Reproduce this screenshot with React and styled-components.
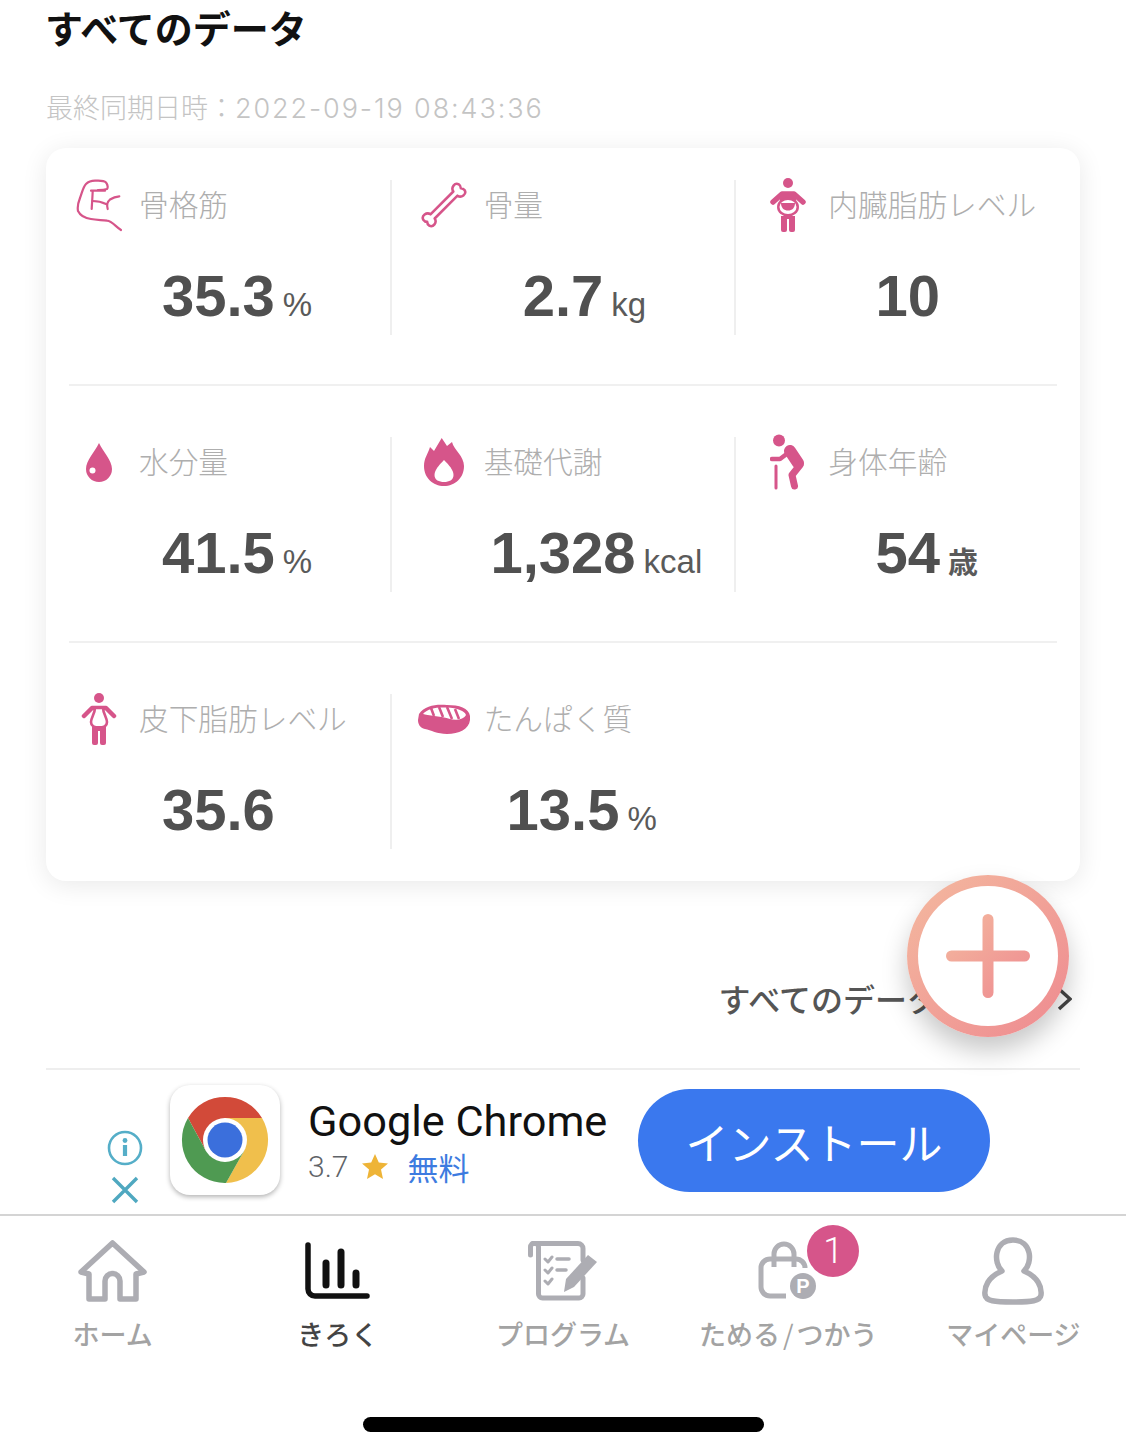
import React from 'react';
import styled, { createGlobalStyle } from 'styled-components';

const PINK = '#d6558a';
const NAV_GREY = '#adadb3';
const JP = '"Noto Sans CJK JP", "Liberation Sans", sans-serif';
const LATIN = '"Liberation Sans", "Noto Sans CJK JP", sans-serif';

const GlobalStyle = createGlobalStyle`
  html, body {
    margin: 0;
    padding: 0;
    background: #fff;
  }
  body {
    font-family: ${JP};
    overflow: hidden;
  }
`;

const Screen = styled.div`
  position: relative;
  width: 1126px;
  height: 1454px;
  overflow: hidden;
  background: #fff;
`;

const Content = styled.div`
  padding: 6px 46px 0;
`;

const Title = styled.h1`
  margin: 0 0 0 -1px;
  font-size: 38px;
  line-height: 42px;
  font-weight: 700;
  color: #111;
`;

const SyncTime = styled.div`
  margin: 41px 0 0 0;
  font-size: 27px;
  line-height: 36px;
  font-weight: 300;
  color: #c4c4c4;
  white-space: nowrap;

  span {
    font-family: "Inter", sans-serif;
    font-size: 27px;
    letter-spacing: 1.9px;
  }
`;

const Card = styled.section`
  margin-top: 21px;
  padding: 32px 0 32px;
  background: #fff;
  border-radius: 20px;
  box-shadow: 0 4px 26px rgba(0, 0, 0, 0.09);
`;

const Row = styled.div`
  display: grid;
  grid-template-columns: repeat(3, 1fr);
`;

const Rule = styled.div`
  height: 2px;
  margin: 49px 23px 51px;
  background: #f0f0f0;
`;

const Cell = styled.div`
  height: 155px;
  box-shadow: ${(p) => (p.$divided ? 'inset 1px 0 0 #efefef, -1px 0 0 #efefef' : 'none')};
`;

const CellHead = styled.div`
  display: flex;
  align-items: center;
  height: 50px;
`;

const IconSlot = styled.div`
  display: flex;
  justify-content: center;
  align-items: center;
  flex: none;
  width: 60px;
  height: 50px;
  margin: 0 10px 0 23px;
`;

const Label = styled.div`
  margin-top: -2px;
  font-size: 29.7px;
  line-height: 40px;
  font-weight: 300;
  color: #aeaeae;
  white-space: nowrap;
`;

const Value = styled.div`
  display: grid;
  grid-template-columns: 1fr auto 1fr;
  column-gap: 8px;
  align-items: baseline;
  margin-top: 36px;
`;

const Num = styled.div`
  grid-column: 2;
  font-family: ${LATIN};
  font-size: 58px;
  line-height: 60px;
  font-weight: 700;
  color: #505050;
`;

const Unit = styled.div`
  grid-column: 3;
  font-family: ${LATIN};
  font-size: ${(p) => (p.$bold ? '30px' : '33px')};
  font-weight: ${(p) => (p.$bold ? 700 : 400)};
  color: #5a5a5a;
  white-space: nowrap;
`;

const MoreLink = styled.div`
  display: flex;
  justify-content: flex-end;
  align-items: center;
  gap: 118px;
  height: 40px;
  margin: 98px 8px 0 0;
  font-size: 32px;
  font-weight: 500;
  color: #555;

  span {
    margin-top: -2px;
  }
`;

const Divider = styled.div`
  height: 2px;
  margin-top: 49px;
  background: #eeeeee;
`;

const AddButton = styled.div`
  position: absolute;
  left: 907px;
  top: 875px;
  box-sizing: border-box;
  width: 162px;
  height: 162px;
  padding: 11px;
  border-radius: 50%;
  background: linear-gradient(135deg, #f4b99f, #ee8a90);
  box-shadow: 0 14px 26px rgba(0, 0, 0, 0.22);
`;

const AddInner = styled.div`
  display: flex;
  align-items: center;
  justify-content: center;
  width: 100%;
  height: 100%;
  border-radius: 50%;
  background: #fff;
`;

const Ad = styled.div`
  display: flex;
  height: 144px;
  padding-left: 105px;
`;

const AdControls = styled.div`
  display: flex;
  flex-direction: column;
  align-items: center;
  justify-content: flex-end;
  gap: 10px;
  width: 40px;
  height: 134px;
`;

const AppIcon = styled.div`
  display: flex;
  align-items: center;
  justify-content: center;
  flex: none;
  width: 110px;
  height: 110px;
  margin: 15px 0 0 25px;
  border-radius: 20px;
  background: #fff;
  box-shadow: 0 2px 5px rgba(0, 0, 0, 0.3);
`;

const AdText = styled.div`
  width: 330px;
  margin: 29px 0 0 28px;
`;

const AdTitle = styled.div`
  font-family: "Roboto", sans-serif;
  font-size: 43.3px;
  line-height: 46px;
  color: #111;
  white-space: nowrap;
`;

const AdMeta = styled.div`
  display: flex;
  align-items: center;
  height: 40px;
  margin-top: 1px;
  font-family: "Roboto", sans-serif;
  font-size: 30px;
  font-weight: 300;
  color: #5f6368;
`;

const Star = styled.svg`
  margin: 0 19px 0 14px;
`;

const Price = styled.span`
  font-family: ${JP};
  font-size: 31px;
  font-weight: 400;
  color: #3d7be0;
`;

const InstallButton = styled.div`
  display: flex;
  align-items: center;
  justify-content: center;
  width: 352px;
  height: 103px;
  margin-top: 19px;
  border-radius: 52px;
  background: #3a78ee;
  font-size: 43px;
  color: #fff;
`;

const Nav = styled.nav`
  display: grid;
  grid-template-columns: repeat(5, 1fr);
  padding-top: 20px;
  border-top: 2px solid #d4d4d4;
`;

const Tab = styled.div`
  display: flex;
  flex-direction: column;
  align-items: center;
`;

const TabIcon = styled.div`
  position: relative;
  display: flex;
  align-items: center;
  justify-content: center;
  height: 70px;
`;

const TabLabel = styled.div`
  margin-top: 10px;
  font-size: 27px;
  line-height: 36px;
  font-weight: 500;
  color: ${(p) => (p.$active ? '#444' : '#a3a3a3')};
  white-space: nowrap;
`;

const Slash = styled.span`
  margin: 0 3px;
  font-weight: 400;
`;

const Badge = styled.div`
  position: absolute;
  left: 49px;
  top: -11px;
  display: flex;
  align-items: center;
  justify-content: center;
  width: 52px;
  height: 52px;
  border-radius: 50%;
  background: ${PINK};
  font-family: "Roboto", sans-serif;
  font-size: 36px;
  font-weight: 300;
  color: #fff;
`;

const HomeBar = styled.div`
  width: 401px;
  height: 15px;
  margin: 65px auto 0;
  border-radius: 8px;
  background: #000;
`;

const MuscleIcon = () => (
  <svg width="46" height="54" viewBox="-1 -1 46 54" fill="none" stroke={PINK} strokeWidth="2.2" strokeLinecap="round" strokeLinejoin="round">
    <path d="M44 51 C39 48 35 42 30 41.7 C24 41 19 41 14 40 C10 39.5 4 38 1 32 C0 27 1 24 3 19 C5 14 6 8 9 5 C12 2 15 1.5 19 1.7 C23 1.5 27 1.5 29 3.5 C31 6 31 9 30 10 C27 11 24 11 21 11" />
    <path d="M14 11.7 H28 M15.7 12 C15.5 18 15 24 14.7 30" />
    <path d="M15.5 22 C20 22 25 23 29 25 M30.7 30 C29.5 26 30 23 33 20.5 C36 18.5 39 17.5 42.3 17.3" />
  </svg>
);

const BoneIcon = () => (
  <svg width="46" height="46" viewBox="0 0 46 46" fill="none" stroke={PINK} strokeWidth="3" strokeLinejoin="round">
    <g transform="translate(23 23) rotate(-45) scale(.85)">
      <path d="M-19 -3.5 H19 C20 -9 28 -10 29.5 -5 C30 -2.5 29 -1 28 0 C29 1 30 2.5 29.5 5 C28 10 20 9 19 3.5 H-19 C-20 9 -28 10 -29.5 5 C-30 2.5 -29 1 -28 0 C-29 -1 -30 -2.5 -29.5 -5 C-28 -10 -20 -9 -19 -3.5 Z" />
    </g>
  </svg>
);

const VisceralIcon = () => (
  <svg width="38" height="55" viewBox="0 0 38 55">
    <circle cx="19" cy="5" r="5" fill={PINK} />
    <path d="M4 24 L13 16 H25 L34 24" fill="none" stroke={PINK} strokeWidth="5.5" strokeLinecap="round" strokeLinejoin="round" />
    <rect x="11" y="14" width="16" height="12" fill={PINK} />
    <ellipse cx="19" cy="29" rx="11" ry="9.5" fill={PINK} />
    <ellipse cx="19" cy="29" rx="8.5" ry="7" fill="#fff" />
    <path d="M12 25 H26 C26 30 23 32.5 19 32.5 C15 32.5 12 30 12 25 Z" fill={PINK} />
    <path d="M12 38 H26 V52 a2 2 0 0 1-2 2 h-2 a2 2 0 0 1-2-2 V41 h-2 V52 a2 2 0 0 1-2 2 h-2 a2 2 0 0 1-2-2 Z" fill={PINK} />
  </svg>
);

const DropIcon = () => (
  <svg width="26" height="39" viewBox="0 0 26 39">
    <path d="M13 0 C17 9 26 17 26 26 A13 13 0 0 1 0 26 C0 17 9 9 13 0 Z" fill={PINK} />
    <circle cx="6.5" cy="27.5" r="3" fill="#fff" />
  </svg>
);

const FlameIcon = () => (
  <svg width="40" height="48" viewBox="0 0 40 48">
    <path d="M17.7 0 L23 8 L28 4 C30 12 40 18 40 28 C40 40 31 48 20 48 C9 48 0 40 0 28 C0 20 4 16 6 9 L10 13 Z" fill={PINK} />
    <path d="M20 22 C25 27 29.5 32 29.5 37 C29.5 42 25 44 20 44 C15 44 10.5 42 10.5 37 C10.5 32 15 27 20 22 Z" fill="#fff" />
  </svg>
);

const ElderIcon = () => (
  <svg width="36" height="56" viewBox="0 0 36 56" fill="none" stroke={PINK} strokeLinecap="round" strokeLinejoin="round">
    <circle cx="9" cy="6.5" r="6" fill={PINK} stroke="none" />
    <path d="M20 17 L28 29" strokeWidth="12" />
    <path d="M18 19 L10 25 H2" strokeWidth="4.5" />
    <path d="M30 31 L22 41 L24.5 52" strokeWidth="7" />
    <path d="M6 32 V54" strokeWidth="3" />
  </svg>
);

const FatIcon = () => (
  <svg width="36" height="53" viewBox="0 0 36 53">
    <circle cx="18" cy="5" r="5" fill={PINK} />
    <path d="M3 23 L11 15 H25 L33 23" fill="none" stroke={PINK} strokeWidth="4.5" strokeLinecap="round" strokeLinejoin="round" />
    <path d="M14 15 H22 C22 20 26 25 26 29 C26 33 23 34.5 18 34.5 C13 34.5 10 33 10 29 C10 25 14 20 14 15 Z" fill="#fff" stroke={PINK} strokeWidth="2.6" />
    <path d="M11 33 H25 V50 a2 2 0 0 1-2 2 h-2 a2 2 0 0 1-2-2 V38 h-2 V50 a2 2 0 0 1-2 2 h-2 a2 2 0 0 1-2-2 Z" fill={PINK} />
  </svg>
);

const MeatIcon = () => (
  <svg width="54" height="30" viewBox="0 0 54 30">
    <path d="M2 10 C8 1 20 0 30 1 C42 1 52 4 53 12 L53 16 C52 25 42 30 30 30 C20 30 14 26 8 25 C3 24 1 20 1 16 Z" fill={PINK} />
    <path d="M6 10 C11 4 20 3 30 3.5 C40 4 48 7 49 11 C47 15 40 17 33 15 C24 12 14 12 6 10 Z" fill="#fff" />
    <path d="M14 4 L17 12 M22 3 L26 13 M30 3 L35 15 M38 5 L42 15" stroke={PINK} strokeWidth="2.6" />
  </svg>
);

const PlusIcon = () => (
  <svg width="84" height="84" viewBox="0 0 84 84">
    <defs>
      <linearGradient id="plusGrad" x1="0" y1="0" x2="1" y2="1">
        <stop offset="0" stopColor="#f4b99f" />
        <stop offset="1" stopColor="#ee8a90" />
      </linearGradient>
    </defs>
    <path d="M36.5 5.5 a5.5 5.5 0 0 1 11 0 V36.5 H78.5 a5.5 5.5 0 0 1 0 11 H47.5 V78.5 a5.5 5.5 0 0 1-11 0 V47.5 H5.5 a5.5 5.5 0 0 1 0-11 H36.5 Z" fill="url(#plusGrad)" />
  </svg>
);

const Chevron = () => (
  <svg width="15" height="24" viewBox="0 0 15 24" fill="none" stroke="#444" strokeWidth="3.4">
    <path d="M2 2 L13 12 L2 22" />
  </svg>
);

const InfoIcon = () => (
  <svg width="36" height="36" viewBox="0 0 36 36" fill="none" stroke="#55aec8">
    <circle cx="18" cy="18" r="16" strokeWidth="2.6" />
    <circle cx="18" cy="10.5" r="2.4" fill="#55aec8" stroke="none" />
    <path d="M18 15 V26" strokeWidth="4.2" />
  </svg>
);

const CloseIcon = () => (
  <svg width="28" height="28" viewBox="0 0 28 28" stroke="#4fa8c0" strokeWidth="3.4">
    <path d="M2 2 L26 26 M26 2 L2 26" />
  </svg>
);

const ChromeLogo = () => (
  <svg width="88" height="88" viewBox="-44 -44 88 88">
    <path d="M-37 -22 A43 43 0 0 1 37 -22 L0 -22 L-19 11 Z" fill="#d24a39" />
    <path d="M37 -22 A43 43 0 0 1 1 43 L19 11 L0 -22 Z" fill="#f0bf4c" />
    <path d="M1 43 A43 43 0 0 1 -37 -22 L-19 11 L19 11 Z" fill="#4f9a52" />
    <circle r="22" fill="#fff" />
    <circle r="17.5" fill="#3b6fdc" />
  </svg>
);

const HomeIcon = () => (
  <svg width="69" height="62" viewBox="0 0 69 62" fill="none" stroke={NAV_GREY} strokeWidth="5.5" strokeLinejoin="round">
    <path d="M34.5 3 L66 32 L58 34 V59 H42 V41 a7.5 7.5 0 0 0-15 0 V59 H11 V34 L3 32 Z" />
  </svg>
);

const ChartIcon = () => (
  <svg width="66" height="58" viewBox="0 0 66 58" fill="none" stroke="#111" strokeLinecap="round">
    <path d="M3 3 V47 a7 7 0 0 0 7 7 H62" strokeWidth="5.5" />
    <path d="M21 21 V43 M36 10 V43 M51 31 V43" strokeWidth="7" />
  </svg>
);

const ProgramIcon = () => (
  <svg width="70" height="60" viewBox="0 0 70 60" fill="none" stroke={NAV_GREY} strokeLinecap="round" strokeLinejoin="round">
    <path d="M2.5 14 V6 a4 4 0 0 1 8 0 V53 a4 4 0 0 0 4 4 H51 a4 4 0 0 0 4-4 V37 M5 2.5 H50 a5 5 0 0 1 5 5 V19" strokeWidth="5" />
    <path d="M17 18 l3 3 l4-5 M17 29 l3 3 l4-5 M17 40 l3 3 l4-5" strokeWidth="3" />
    <path d="M29 18 H41 M29 29 H38" strokeWidth="3.5" />
    <path d="M60 14 L69 21 L46 46 L36 51 L38 38 Z" fill={NAV_GREY} stroke="none" />
  </svg>
);

const BagIcon = () => (
  <svg width="60" height="60" viewBox="0 0 60 60" fill="none" stroke="#b0b0b5">
    <path d="M28 55 H12 a9 9 0 0 1-9-9 V27 a9 9 0 0 1 9-9 H38 a9 9 0 0 1 9 9" strokeWidth="5" />
    <path d="M16 26 V13 a10 10 0 0 1 20 0 V26" strokeWidth="5" />
    <circle cx="45" cy="45" r="13" fill={NAV_GREY} stroke="none" />
    <text x="45" y="52" textAnchor="middle" fontFamily="Liberation Sans" fontWeight="700" fontSize="20" fill="#fff" stroke="none">P</text>
  </svg>
);

const PersonIcon = () => (
  <svg width="62" height="68" viewBox="0 0 62 68" fill="none" stroke={NAV_GREY} strokeWidth="5.5" strokeLinejoin="round">
    <path d="M20 34 C11 26 12 3 31 3 C50 3 51 26 42 34 C56 40 60 50 59 58 C58 64 50 65 31 65 C12 65 4 64 3 58 C2 50 6 40 20 34 Z" />
  </svg>
);

const metrics = [
  [
    { icon: <MuscleIcon />, label: '骨格筋', value: '35.3', unit: '%' },
    { icon: <BoneIcon />, label: '骨量', value: '2.7', unit: 'kg' },
    { icon: <VisceralIcon />, label: '内臓脂肪レベル', value: '10' },
  ],
  [
    { icon: <DropIcon />, label: '水分量', value: '41.5', unit: '%' },
    { icon: <FlameIcon />, label: '基礎代謝', value: '1,328', unit: 'kcal' },
    { icon: <ElderIcon />, label: '身体年齢', value: '54', unit: '歳', boldUnit: true },
  ],
  [
    { icon: <FatIcon />, label: '皮下脂肪レベル', value: '35.6' },
    { icon: <MeatIcon />, label: 'たんぱく質', value: '13.5', unit: '%' },
  ],
];

export default function App() {
  return (
    <Screen>
      <GlobalStyle />
      <Content>
        <Title>すべてのデータ</Title>
        <SyncTime>最終同期日時：<span>2022-09-19 08:43:36</span></SyncTime>
        <Card>
          {metrics.map((row, r) => (
            <React.Fragment key={r}>
              {r > 0 && <Rule />}
              <Row>
                {row.map((m, i) => (
                  <Cell key={m.label} $divided={i > 0}>
                    <CellHead>
                      <IconSlot>{m.icon}</IconSlot>
                      <Label>{m.label}</Label>
                    </CellHead>
                    <Value>
                      <Num>{m.value}</Num>
                      {m.unit && <Unit $bold={m.boldUnit}>{m.unit}</Unit>}
                    </Value>
                  </Cell>
                ))}
              </Row>
            </React.Fragment>
          ))}
        </Card>
        <MoreLink>
          <span>すべてのデータ</span>
          <Chevron />
        </MoreLink>
        <Divider />
      </Content>

      <Ad>
        <AdControls>
          <InfoIcon />
          <CloseIcon />
        </AdControls>
        <AppIcon>
          <ChromeLogo />
        </AppIcon>
        <AdText>
          <AdTitle>Google Chrome</AdTitle>
          <AdMeta>
            3.7
            <Star width="26" height="25" viewBox="0 0 26 25">
              <path d="M13 0 L16.8 8.6 L26 9.5 L19 15.6 L21 25 L13 20.2 L5 25 L7 15.6 L0 9.5 L9.2 8.6 Z" fill="#eeb437" />
            </Star>
            <Price>無料</Price>
          </AdMeta>
        </AdText>
        <InstallButton>インストール</InstallButton>
      </Ad>

      <Nav>
        <Tab>
          <TabIcon><HomeIcon /></TabIcon>
          <TabLabel>ホーム</TabLabel>
        </Tab>
        <Tab>
          <TabIcon><ChartIcon /></TabIcon>
          <TabLabel $active>きろく</TabLabel>
        </Tab>
        <Tab>
          <TabIcon><ProgramIcon /></TabIcon>
          <TabLabel>プログラム</TabLabel>
        </Tab>
        <Tab>
          <TabIcon>
            <BagIcon />
            <Badge>1</Badge>
          </TabIcon>
          <TabLabel>ためる<Slash>/</Slash>つかう</TabLabel>
        </Tab>
        <Tab>
          <TabIcon><PersonIcon /></TabIcon>
          <TabLabel>マイページ</TabLabel>
        </Tab>
      </Nav>

      <HomeBar />

      <AddButton>
        <AddInner>
          <PlusIcon />
        </AddInner>
      </AddButton>
    </Screen>
  );
}
